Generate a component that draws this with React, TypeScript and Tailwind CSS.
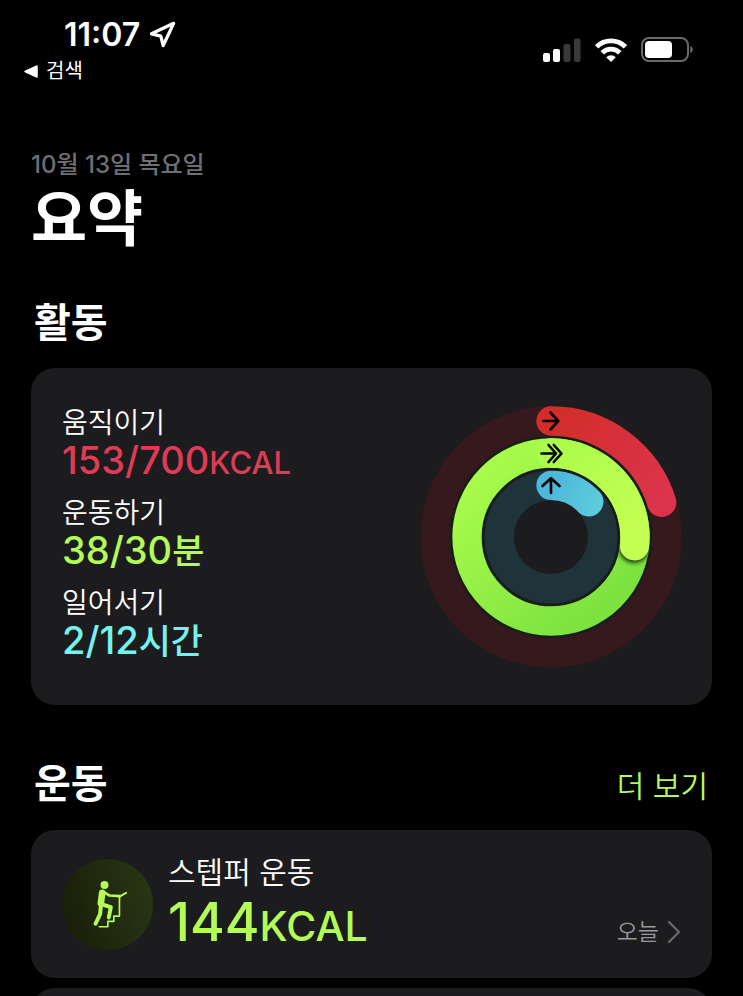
import { Navigation } from 'lucide-react';

interface Metric {
  label: string;
  value: string;
  unit: string;
  color: string;
  unitClass: string;
}

const metrics: Metric[] = [
  { label: '움직이기', value: '153/700', unit: 'KCAL', color: 'text-[#de3b56]', unitClass: 'text-[31px] font-medium' },
  { label: '운동하기', value: '38/30', unit: '분', color: 'text-[#b4fb58]', unitClass: 'text-[35px] font-medium' },
  { label: '일어서기', value: '2/12', unit: '시간', color: 'text-[#74f3ee]', unitClass: 'text-[35px] font-medium' },
];

function SignalIcon() {
  return (
    <svg width="38" height="24" viewBox="0 0 38 24" aria-hidden="true">
      <rect x="0" y="15" width="7" height="9" rx="2" fill="#fff" />
      <rect x="10" y="11" width="7" height="13" rx="2" fill="#fff" />
      <rect x="20.5" y="6" width="7" height="18" rx="2" fill="#3a3a3a" />
      <rect x="31" y="0.5" width="6.5" height="23.5" rx="2" fill="#3a3a3a" />
    </svg>
  );
}

function WifiIcon() {
  return (
    <svg width="32" height="24" viewBox="0 0 32 24" aria-hidden="true">
      <g fill="none" stroke="#fff" strokeWidth="4.8">
        <path d="M1.6 8.8a20.6 20.6 0 0 1 28.8 0" />
        <path d="M7.2 14.8a12.6 12.6 0 0 1 17.6 0" />
      </g>
      <path d="M16 24l-4.8-4.8a7 7 0 0 1 9.6 0z" fill="#fff" />
    </svg>
  );
}

function BatteryIcon() {
  return (
    <svg width="52" height="25" viewBox="0 0 52 25" aria-hidden="true">
      <rect x="1" y="1" width="46" height="23" rx="7" fill="none" stroke="#6a6a6a" strokeWidth="2" />
      <rect x="4" y="4" width="27" height="17" rx="4" fill="#fff" />
      <path d="M49.3 9c1.8.6 2.5 2 2.5 3.5s-.7 2.9-2.5 3.5z" fill="#6a6a6a" />
    </svg>
  );
}

function ActivityRings() {
  return (
    <svg className="size-[262px] shrink-0" viewBox="-131 -131 262 262" role="img" aria-label="활동 링">
      <defs>
        <linearGradient id="move" gradientUnits="userSpaceOnUse" x1="0" y1="-116" x2="111" y2="-35">
          <stop offset="0" stopColor="#d32d2a" />
          <stop offset="1" stopColor="#dd334c" />
        </linearGradient>
        <linearGradient id="exercise" gradientUnits="userSpaceOnUse" x1="70" y1="50" x2="-50" y2="-80">
          <stop offset="0" stopColor="#7de240" />
          <stop offset="1" stopColor="#a8fb4b" />
        </linearGradient>
        <linearGradient id="exerciseLap" gradientUnits="userSpaceOnUse" x1="0" y1="-84" x2="70" y2="10">
          <stop offset="0" stopColor="#acfc4c" />
          <stop offset="1" stopColor="#c4ff52" />
        </linearGradient>
        <linearGradient id="stand" gradientUnits="userSpaceOnUse" x1="0" y1="-52" x2="46" y2="-30">
          <stop offset="0" stopColor="#4db7dc" />
          <stop offset="1" stopColor="#5ccbd9" />
        </linearGradient>
        <filter id="capShadow" x="-50%" y="-50%" width="200%" height="200%">
          <feGaussianBlur stdDeviation="2" />
        </filter>
        <mask id="exerciseMask" maskUnits="userSpaceOnUse" x="-131" y="-131" width="262" height="262">
          <circle r="84" fill="none" stroke="#fff" strokeWidth="29.3" />
        </mask>
      </defs>

      <g fill="none" strokeWidth="29.3" strokeLinecap="round">
        {/* Move */}
        <circle r="116" stroke="#36191d" />
        <path d="M0-116A116 116 0 0 1 110.7-34.7" stroke="url(#move)" />

        {/* Exercise, past one full lap */}
        <circle r="51.7" stroke="#1f333a" />
        <circle r="84" stroke="#16210f" strokeWidth="32" />
        <circle r="84" stroke="url(#exercise)" />
        <g mask="url(#exerciseMask)">
          <circle cx="83" cy="11" r="15" fill="#17380c" filter="url(#capShadow)" />
        </g>
        <path d="M0-84A84 84 0 0 1 83.5 8.8" stroke="url(#exerciseLap)" />

        {/* Stand */}
        <path d="M0-51.7A51.7 51.7 0 0 1 37.8-35.2" stroke="url(#stand)" />
      </g>

      {/* Direction arrows */}
      <g fill="none" stroke="#000" strokeWidth="2.6" strokeLinecap="round" strokeLinejoin="round">
        <path d="M-7.5-116H7M-.5-124.5L7.3-116L-.5-107.5" />
        <path d="M-9.5-83.5H5M-2.5-92L5-83.5L-2.5-75M2.8-92L10.5-83.5L2.8-75" />
        <path d="M0-44V-58.5M-8.5-51L0-58.8L8.5-51" />
      </g>
    </svg>
  );
}

function StairStepperIcon() {
  return (
    <svg className="size-[91px] shrink-0" viewBox="20 23 274 274" aria-hidden="true">
      <defs>
        <linearGradient id="badge" x1="0" y1="0.6" x2="1" y2="0.3">
          <stop offset="0" stopColor="#1a1f08" />
          <stop offset="1" stopColor="#293515" />
        </linearGradient>
      </defs>
      <circle cx="157" cy="160" r="137" fill="url(#badge)" />
      <g fill="none" stroke="#b4fb58" strokeLinecap="round" strokeLinejoin="round">
        <path d="M141 125L137 156" strokeWidth="20" />
        <path d="M144 121L163 133L195 135" strokeWidth="8" />
        <path d="M193 136L213 125" strokeWidth="6" />
        <path d="M193 137V195H176V211H158V227H132" strokeWidth="5" />
        <path d="M137 163L135 188L121 218" strokeWidth="12" />
        <path d="M141 160L167 168L161 199" strokeWidth="12" />
      </g>
      <circle cx="148" cy="101" r="12" fill="#b4fb58" />
    </svg>
  );
}

function StatusBar() {
  return (
    <header className="flex items-start justify-between pt-[17px] pr-[50px] pl-6 text-white">
      <div>
        <div className="flex items-center gap-2 pl-10 text-[32px] leading-9 font-semibold">
          <time>11:07</time>
          <Navigation className="size-7" strokeWidth={2.8} aria-hidden="true" />
        </div>
        <a href="#search" className="flex items-center gap-2 text-[20px] leading-9">
          <svg width="14" height="13" viewBox="0 0 14 13" aria-hidden="true">
            <path d="M1 6.5L13 1V12z" fill="#fff" stroke="#fff" strokeWidth="1.5" strokeLinejoin="round" />
          </svg>
          검색
        </a>
      </div>
      <div className="mt-5 flex items-center gap-[14px]">
        <SignalIcon />
        <WifiIcon />
        <BatteryIcon />
      </div>
    </header>
  );
}

function ActivityCard() {
  return (
    <div className="mt-[21px] flex items-start justify-between rounded-3xl bg-[#1c1c1e] pt-[38px] pr-[30px] pb-[37px] pl-[31px]">
      <dl className="flex flex-col gap-4">
        {metrics.map((metric) => (
          <div key={metric.label}>
            <dt className="text-[28px] leading-[34px] font-[350] text-white">{metric.label}</dt>
            <dd className={`text-[38px] leading-10 font-[450] ${metric.color}`}>
              {metric.value}
              <span className={`leading-none ${metric.unitClass}`}>{metric.unit}</span>
            </dd>
          </div>
        ))}
      </dl>
      <ActivityRings />
    </div>
  );
}

function WorkoutCard() {
  return (
    <a href="#workout" className="mt-[22px] flex items-center rounded-3xl bg-[#1c1c1e] px-[31px] py-6">
      <StairStepperIcon />
      <div className="ml-[15px] flex-1">
        <h3 className="text-[30px] leading-9 font-[350] text-white">스텝퍼 운동</h3>
        <p className="text-[53px] leading-16 font-[450] text-[#b4fb58]">
          144<span className="text-[41px] leading-none">KCAL</span>
        </p>
      </div>
      <div className="flex items-center gap-2 self-end pb-1 text-[23px] leading-9 font-[350] text-[#98989d]">
        오늘
        <svg width="14" height="24" viewBox="0 0 14 24" aria-hidden="true">
          <path
            d="M2 2L12 12L2 22"
            fill="none"
            stroke="#6a6a6e"
            strokeWidth="2.2"
            strokeLinecap="round"
            strokeLinejoin="round"
          />
        </svg>
      </div>
    </a>
  );
}

export default function App() {
  return (
    <div className="h-screen overflow-hidden bg-black font-['Inter','Noto_Sans_CJK_KR',sans-serif]">
      <StatusBar />
      <main className="px-[31px] pt-[60px]">
        <p className="text-[24px] leading-8 font-medium text-[#6f6f73]">10월 13일 목요일</p>
        <h1 className="text-[61px] leading-[76px] font-bold text-white">요약</h1>

        <section className="mt-[42px]">
          <h2 className="pl-[3px] text-[40px] leading-12 font-bold text-white">활동</h2>
          <ActivityCard />
        </section>

        <section className="mt-[55px]">
          <div className="flex items-end justify-between pr-1 pl-[3px]">
            <h2 className="text-[40px] leading-12 font-bold text-white">운동</h2>
            <a href="#workouts" className="text-[30px] leading-11 font-[350] text-[#b4fb58]">
              더 보기
            </a>
          </div>
          <WorkoutCard />
          {/* Next workout, cut off by the fold */}
          <div className="mt-[10px] h-[148px] rounded-3xl bg-[#1c1c1e]" />
        </section>
      </main>
    </div>
  );
}
